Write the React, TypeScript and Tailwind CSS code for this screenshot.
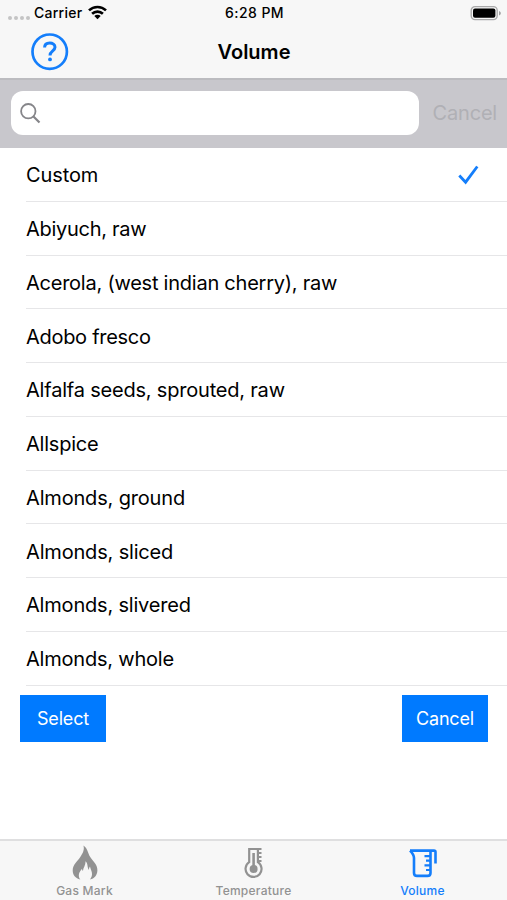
const foods = [
  { name: "Custom", tracking: "tracking-[-0.1px]" },
  { name: "Abiyuch, raw", tracking: "tracking-[-0.28px]" },
  { name: "Acerola, (west indian cherry), raw", tracking: "tracking-[-0.24px]" },
  { name: "Adobo fresco", tracking: "tracking-[-0.29px]" },
  { name: "Alfalfa seeds, sprouted, raw", tracking: "tracking-[-0.2px]" },
  { name: "Allspice", tracking: "tracking-[-0.22px]" },
  { name: "Almonds, ground", tracking: "tracking-[-0.17px]" },
  { name: "Almonds, sliced", tracking: "tracking-[-0.17px]" },
  { name: "Almonds, slivered", tracking: "tracking-[-0.19px]" },
  { name: "Almonds, whole", tracking: "tracking-[-0.21px]" },
];

function StatusBar() {
  return (
    <div className="flex h-[26px] items-center pl-2 pr-[6px]">
      <div className="flex flex-1 items-center">
        <div className="mt-[9px] flex gap-[2px]">
          {[0, 1, 2, 3].map((i) => (
            <span key={i} className="size-[4px] rounded-full bg-[#c4c4c5]" />
          ))}
        </div>
        <span className="ml-1 text-[14px] font-medium leading-[26px] tracking-[0.25px]">Carrier</span>
        <svg className="-mt-[2px] ml-[6px]" width="19" height="15" viewBox="0 0 19 15" fill="none" stroke="#000" strokeWidth="2.6">
          <path d="M1 5.400A12.200 12.200 0 0 1 18 5.400" />
          <path d="M4.100 8.800A7.700 7.700 0 0 1 14.900 8.800" />
          <path d="M9.500 14.200 6.300 11A4.600 4.600 0 0 1 12.700 11Z" fill="#000" stroke="none" />
        </svg>
      </div>
      <span className="text-[14px] font-medium leading-[26px] tracking-[0.45px]">6:28 PM</span>
      <div className="flex flex-1 justify-end">
        <svg width="31" height="16" viewBox="0 0 31 16">
          <rect x="1.200" y="1.600" width="26" height="13" rx="3.800" fill="#f7f7f7" stroke="#a9a9aa" strokeWidth="1.400" />
          <rect x="3" y="3.400" width="22.400" height="9.400" rx="2" fill="#000" />
          <path d="M29 6v4.400c1.300-.5 1.800-1.200 1.800-2.200S30.300 6.500 29 6Z" fill="#a0a0a1" />
        </svg>
      </div>
    </div>
  );
}

function NavBar() {
  return (
    <div className="flex h-[52px] items-center px-[31px]">
      <div className="flex-1">
        <svg width="38" height="38" viewBox="0 0 38 38" fill="none" stroke="#147efb">
          <circle cx="18.700" cy="18.700" r="17.200" strokeWidth="2.700" />
          <path d="M13.600 14.600C13.600 11.600 15.700 10.100 18.700 10.100S24 11.700 24 14.300C24 17.800 19 18 19 22.400" strokeWidth="3" />
          <circle cx="19" cy="26.400" r="1.900" fill="#147efb" stroke="none" />
        </svg>
      </div>
      <h1 className="pl-px text-[20px] font-semibold leading-[52px] tracking-[0px]">Volume</h1>
      <div className="flex-1" />
    </div>
  );
}

function SearchBar() {
  return (
    <div className="flex h-[70px] items-center border-t-2 border-[#bcbcc0] bg-[#c8c7cc] pb-[2px] pl-[11px] pr-[10px]">
      <div className="flex h-[44px] w-[408px] items-center rounded-[12px] bg-white pl-[9px]">
        <svg width="21" height="21" viewBox="0 0 21 21" fill="none" stroke="#858589" strokeWidth="1.800">
          <circle cx="8.300" cy="8.200" r="7.200" />
          <path d="m13.500 13.500 6 6" strokeWidth="2.200" />
        </svg>
      </div>
      <span className="ml-auto text-[20px] tracking-[-0.2px] text-[#b0b0b5]">Cancel</span>
    </div>
  );
}

function Flame() {
  return (
    <svg width="28" height="36" viewBox="0 0 28 36" fill="#929292">
      <path d="M12.400.5C17 3.500 16.600 8 19.400 12.300C22 16.300 26.700 19.800 26.400 25.500C26.200 30.300 23.400 33.600 19 34.600C20.300 32.500 21.400 30.500 20.900 27.800C20.500 25.400 19.300 23.800 19 21.500C18.200 22.700 17.900 23.700 17.900 25C16.100 22.800 17.200 18.800 14.600 16.300C14.600 20.500 12.300 22.600 11.900 26C11.300 25.200 11.100 24.600 11 23.700C8.300 26.800 6.400 30.500 9.300 34.600C4.500 33.400 1.600 30 1.700 25.300C1.800 19.200 6.200 16.500 9.300 11.900C12 8 13.700 4.500 12.400.5Z" />
    </svg>
  );
}

function Thermometer() {
  return (
    <svg width="20" height="32" viewBox="0 0 20 32" fill="none" stroke="#929292" strokeWidth="2.200">
      <path d="M17.500 2H5.200V15.200A8 8 0 1 0 13.900 15.200V2" />
      <path d="M14 6h3.500M14 10h3.500M14 14h3.500" strokeWidth="2" />
      <path d="M9.600 6V21" strokeWidth="2.600" />
      <circle cx="9.600" cy="21.900" r="4" fill="#929292" stroke="none" />
    </svg>
  );
}

function MeasuringJug() {
  return (
    <svg width="28" height="29" viewBox="0 0 28 29" fill="none" stroke="#147efb" strokeWidth="2.600">
      <path d="M1 1.600H25Q26.500 1.600 26.500 3.100V14.500" />
      <path d="M1 1.600Q5 5.500 5 9V24Q5 26.900 8 26.900H18.500Q21.500 26.900 21.500 24V1.600" />
      <path d="M15.500 7.200h6M17 11.600h4.500M15.500 16.400h6M17 21h4.500" strokeWidth="2.200" />
    </svg>
  );
}

const tabs = [
  { label: "Gas Mark", icon: <Flame />, color: "text-[#929292]" },
  { label: "Temperature", icon: <Thermometer />, color: "text-[#929292]" },
  { label: "Volume", icon: <MeasuringJug />, color: "text-[#147efb]" },
];

export default function App() {
  return (
    <div className="flex h-[900px] w-[507px] flex-col overflow-hidden bg-white font-['Inter','Liberation_Sans',sans-serif] text-black">
      <header className="bg-[#f7f7f7]">
        <StatusBar />
        <NavBar />
      </header>
      <SearchBar />
      <ul className="pl-[26px]">
        {foods.map((food, index) => (
          <li key={food.name} className="flex h-[53.75px] items-center justify-between border-b border-[#e6e6e8] pr-[28px] pt-[2px]">
            <span className={`whitespace-nowrap text-[20px] leading-[50px] ${food.tracking}`}>{food.name}</span>
            {index === 0 && (
              <svg width="22" height="20" viewBox="0 0 22 20" fill="none" stroke="#147efb" strokeWidth="2.800">
                <path d="m2.300 10.500 6.300 6.700L20.300 1.500" />
              </svg>
            )}
          </li>
        ))}
      </ul>
      <div className="flex justify-between pl-5 pr-[19px] pt-[9px]">
        <button className="h-[47px] w-[86px] bg-[#007aff] text-[18px] text-white tracking-[-0.15px]">Select</button>
        <button className="h-[47px] w-[86px] bg-[#007aff] text-[18px] text-white tracking-[-0.2px]">Cancel</button>
      </div>
      <nav className="mt-auto flex h-[61px] border-t-2 border-[#dfdfe0] bg-[#f7f7f7]">
        {tabs.map((tab) => (
          <div key={tab.label} className={`flex flex-1 flex-col items-center ${tab.color}`}>
            <div className="flex h-[43px] items-center pt-[1px]">{tab.icon}</div>
            <span className="text-[12px] font-medium leading-[14px] tracking-[0.25px]">{tab.label}</span>
          </div>
        ))}
      </nav>
    </div>
  );
}
